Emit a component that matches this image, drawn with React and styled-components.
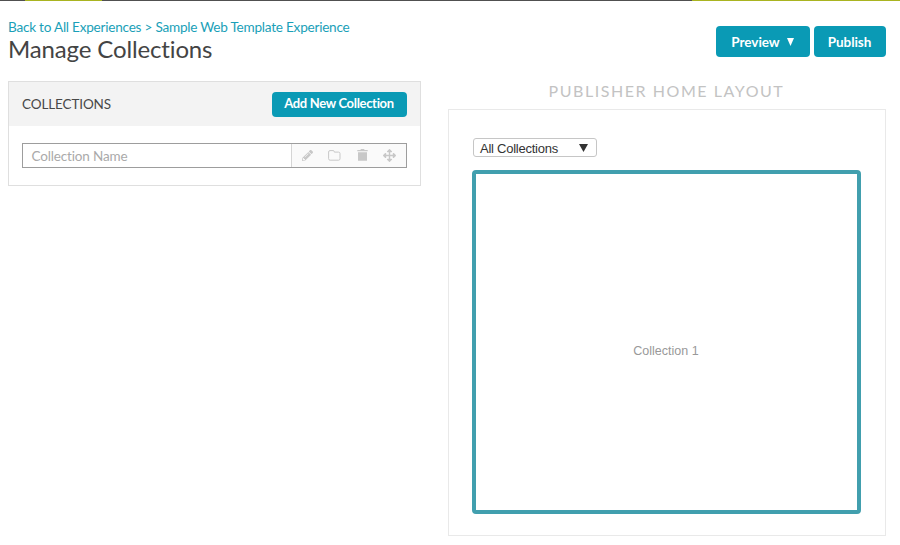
import React from 'react';
import styled, { createGlobalStyle } from 'styled-components';
import { FaPencilAlt, FaArrowsAlt } from 'react-icons/fa';

const GlobalStyle = createGlobalStyle`
  *, *::before, *::after { box-sizing: border-box; }
  body { margin: 0; background: #fff; font-family: Lato, sans-serif; font-variant-ligatures: none; color: #444; }
  button { font-family: inherit; font-variant-ligatures: none; border: 0; cursor: pointer; }
`;

const Page = styled.div`
  height: 545px;
  overflow: hidden;
`;

const TopStrip = styled.div`
  display: grid;
  grid-template-columns: 25px 77px 590px 1fr;
  height: 1px;
`;

const Segment = styled.div`
  background: ${(p) => (p.$accent ? '#a9b420' : '#505050')};
`;

const Header = styled.header`
  display: flex;
  justify-content: space-between;
  height: 80px;
  padding: 17px 14px 0 8px;
`;

const Breadcrumb = styled.nav`
  height: 18px;
  font-size: 13.6px;
  letter-spacing: -0.24px;
  line-height: 18px;
  color: #1a9fb8;
  white-space: nowrap;
`;

const Crumb = styled.a`
  color: inherit;
  text-decoration: none;
`;

const Title = styled.h1`
  margin: 0;
  font-size: 24px;
  letter-spacing: -0.14px;
  line-height: 25px;
  font-weight: 400;
  color: #444;
  white-space: nowrap;
`;

const Actions = styled.div`
  display: flex;
  gap: 4px;
  padding-top: 8px;
`;

const Button = styled.button`
  display: flex;
  align-items: center;
  justify-content: center;
  width: ${(p) => p.$width}px;
  height: ${(p) => (p.$compact ? 25 : 31)}px;
  padding: ${(p) => (p.$compact ? '0 1px 2px 0' : '0 1px 0 0')};
  gap: 7px;
  border-radius: 4px;
  background: #0a9ab5;
  color: #fff;
  font-size: ${(p) => (p.$compact ? 13 : 13.5)}px;
  letter-spacing: ${(p) => (p.$compact ? '-0.32px' : '-0.05px')};
  font-weight: 700;
  white-space: nowrap;
`;

const Columns = styled.main`
  display: flex;
  justify-content: space-between;
  align-items: flex-start;
  padding: 0 14px 0 8px;
`;

const Panel = styled.section`
  width: 413px;
  height: 105px;
  border: 1px solid #dfdfdf;
`;

const PanelHeader = styled.div`
  display: flex;
  align-items: center;
  justify-content: space-between;
  height: 44px;
  padding: 0 13px;
  background: #f3f3f3;
`;

const PanelTitle = styled.h2`
  margin: 0;
  font-size: 13.5px;
  letter-spacing: -0.12px;
  font-weight: 400;
  color: #484848;
`;

const CollectionRow = styled.div`
  display: flex;
  height: 25px;
  margin: 17px 13px 0;
  border: 1px solid #9d9d9d;
`;

const NameField = styled.div`
  flex: 1;
  padding-left: 8.5px;
  font-size: 13.5px;
  letter-spacing: -0.15px;
  line-height: 24px;
  color: #aaa;
`;

const RowTools = styled.div`
  display: grid;
  grid-template-columns: repeat(4, 27.4px);
  justify-content: center;
  align-items: center;
  justify-items: center;
  width: 115px;
  padding: 0 1px 1px 0;
  border-left: 1px solid #d5d5d5;
  background: #fafafa;
  color: #c8c8c8;

  svg { display: block; }
`;

const Publisher = styled.section`
  width: 438px;
`;

const PublisherTitle = styled.h2`
  height: 28px;
  margin: 0;
  padding-right: 1px;
  font-size: 16px;
  line-height: 20px;
  font-weight: 400;
  letter-spacing: 1.55px;
  text-align: center;
  white-space: nowrap;
  color: #c3c3c3;
`;

const LayoutFrame = styled.div`
  height: 427px;
  padding: 28px 24px 0 23px;
  border: 1px solid #e9e9e9;
`;

const Select = styled.button`
  display: flex;
  align-items: center;
  justify-content: space-between;
  width: 124px;
  height: 19px;
  margin-left: 1px;
  padding: 1px 8px 0 6px;
  border: 1px solid #c6c6c6;
  border-radius: 3px;
  background: #fff;
  color: #333;
  font: 13px 'Liberation Sans', Arial, sans-serif;
  letter-spacing: -0.25px;
  white-space: nowrap;
`;

const CollectionTile = styled.div`
  display: flex;
  align-items: center;
  justify-content: center;
  height: 344px;
  margin-top: 13px;
  padding: 17px 1px 0 0;
  border: 4px solid #419fae;
  border-radius: 4px;
  font: 12.5px 'Liberation Sans', Arial, sans-serif;
  color: #999;
`;

const Caret = ({ width, height }) => (
  <svg width={width} height={height} viewBox="0 0 10 10" preserveAspectRatio="none" aria-hidden="true">
    <path d="M0 0H10L5 10Z" fill="currentColor" />
  </svg>
);

const FolderIcon = () => (
  <svg width="13" height="11" viewBox="0 0 13 11" aria-hidden="true">
    <path
      d="M.6 2V8.7Q.6 10.2 2.1 10.2H10.5Q12 10.2 12 8.7V3.6Q12 2.1 10.5 2.1H6.3V1.7Q6.3.6 5.1.6H2Q.6.6.6 2Z"
      fill="none"
      stroke="currentColor"
      strokeWidth="1"
    />
  </svg>
);

const TrashIcon = () => (
  <svg width="11" height="12" viewBox="0 0 11 12" aria-hidden="true">
    <path d="M.3 1H3.3L4 .1H7L7.7 1H10.7V2.2H.3ZM1 3.2H10V11.8H1Z" fill="currentColor" />
  </svg>
);

export default function App() {
  return (
    <Page>
      <GlobalStyle />
      <TopStrip>
        <Segment />
        <Segment $accent />
        <Segment />
        <Segment $accent />
      </TopStrip>
      <Header>
        <div>
          <Breadcrumb>
            <Crumb>Back to All Experiences</Crumb> &gt; <Crumb>Sample Web Template Experience</Crumb>
          </Breadcrumb>
          <Title>Manage Collections</Title>
        </div>
        <Actions>
          <Button $width={94}>
            Preview <Caret width={7} height={8} />
          </Button>
          <Button $width={72}>Publish</Button>
        </Actions>
      </Header>
      <Columns>
        <Panel>
          <PanelHeader>
            <PanelTitle>COLLECTIONS</PanelTitle>
            <Button $compact $width={135}>Add New Collection</Button>
          </PanelHeader>
          <CollectionRow>
            <NameField>Collection Name</NameField>
            <RowTools>
              <FaPencilAlt size={11} />
              <FolderIcon />
              <TrashIcon />
              <FaArrowsAlt size={13} />
            </RowTools>
          </CollectionRow>
        </Panel>
        <Publisher>
          <PublisherTitle>PUBLISHER HOME LAYOUT</PublisherTitle>
          <LayoutFrame>
            <Select>
              All Collections <Caret width={9} height={8} />
            </Select>
            <CollectionTile>Collection 1</CollectionTile>
          </LayoutFrame>
        </Publisher>
      </Columns>
    </Page>
  );
}
